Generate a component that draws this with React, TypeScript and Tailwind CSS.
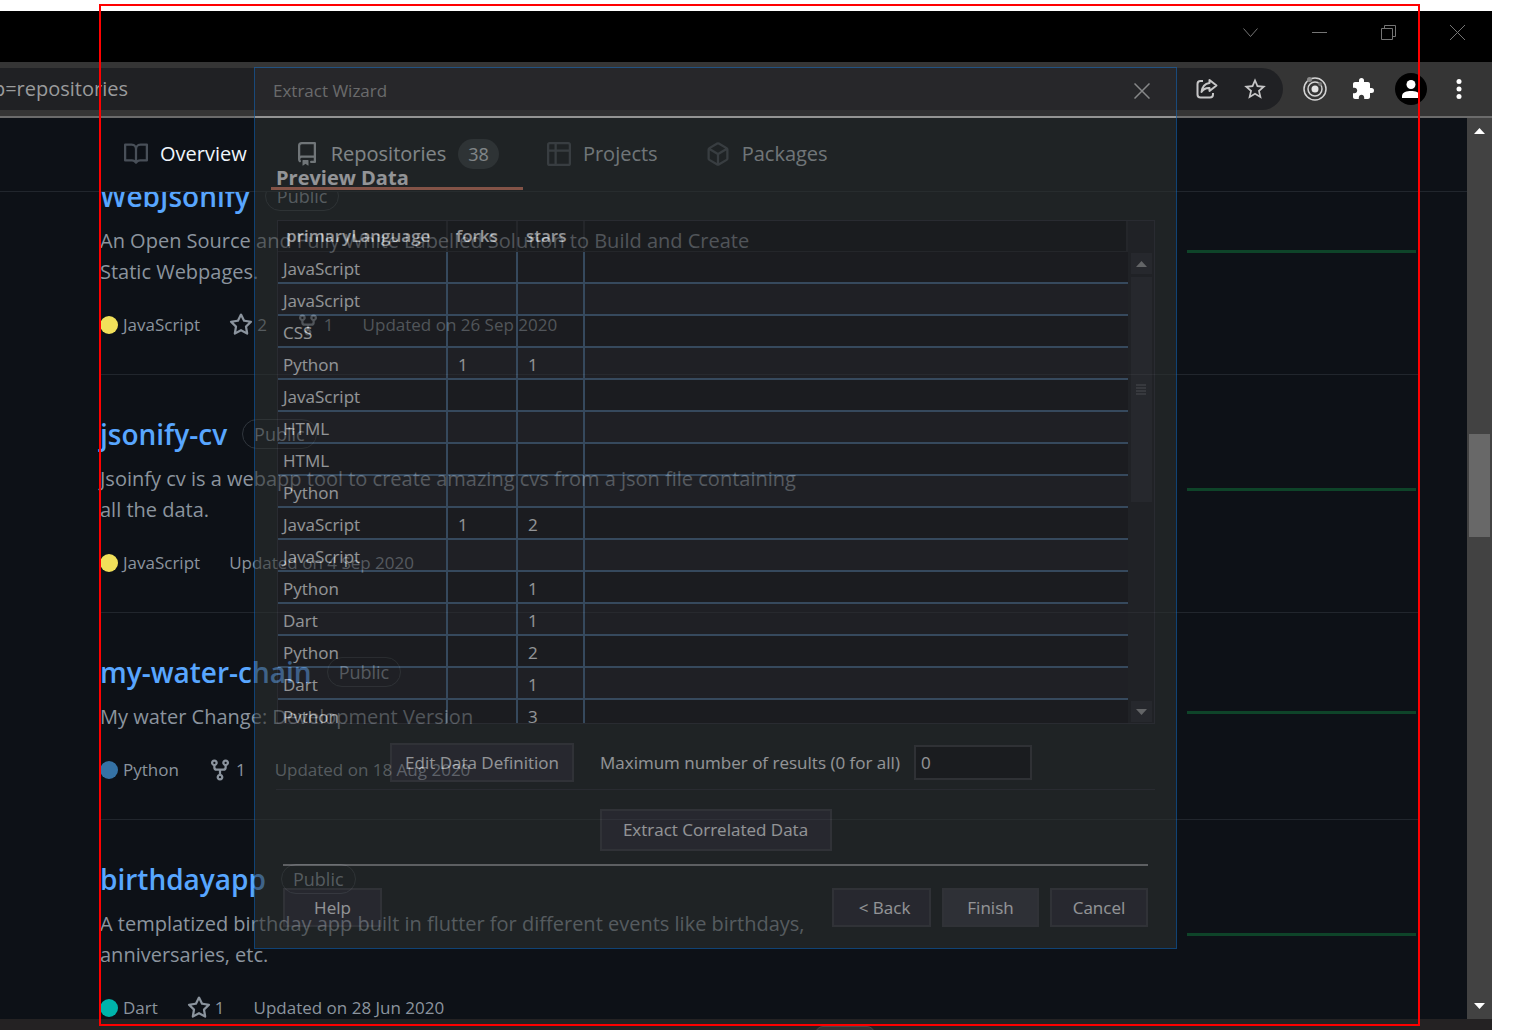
import React from 'react';
import { MdExtension, MdStarBorder } from 'react-icons/md';

const icons = {
  book: 'M0 1.75A.75.75 0 01.75 1h4.253c1.227 0 2.317.59 3 1.501A3.744 3.744 0 0111.006 1h4.245a.75.75 0 01.75.75v10.5a.75.75 0 01-.75.75h-4.507a2.25 2.25 0 00-1.591.659l-.622.621a.75.75 0 01-1.06 0l-.622-.621A2.25 2.25 0 005.258 13H.75a.75.75 0 01-.75-.75V1.75zm8.755 3a2.25 2.25 0 012.25-2.25H14.5v9h-3.757c-.71 0-1.4.201-1.992.572l.004-7.322zm-1.504 7.324l.004-5.073-.002-2.253A2.25 2.25 0 005.003 2.5H1.5v9h3.757a3.75 3.75 0 011.994.574z',
  repo: 'M2 2.5A2.5 2.5 0 014.5 0h8.75a.75.75 0 01.75.75v12.5a.75.75 0 01-.75.75h-2.5a.75.75 0 110-1.5h1.75v-2h-8a1 1 0 00-.714 1.7.75.75 0 01-1.072 1.05A2.495 2.495 0 012 11.5v-9zm10.5-1V9h-8c-.356 0-.694.074-1 .208V2.5a1 1 0 011-1h8zM5 12.25v3.25a.25.25 0 00.4.2l1.45-1.087a.25.25 0 01.3 0L8.6 15.7a.25.25 0 00.4-.2v-3.25a.25.25 0 00-.25-.25h-3.5a.25.25 0 00-.25.25z',
  table: 'M0 1.75C0 .784.784 0 1.75 0h12.5C15.216 0 16 .784 16 1.75v3.585a.746.746 0 010 .83v8.085A1.75 1.75 0 0114.25 16H6.309a.748.748 0 01-1.118 0H1.75A1.75 1.75 0 010 14.25V6.165a.746.746 0 010-.83V1.75zM1.5 6.5v7.75c0 .138.112.25.25.25H5v-8H1.5zM5 5H1.5V1.75a.25.25 0 01.25-.25H5V5zm1.5 1.5v8h7.75a.25.25 0 00.25-.25V6.5h-8zm8-1.5h-8V1.5h7.75a.25.25 0 01.25.25V5z',
  package: 'M8.878.392a1.75 1.75 0 00-1.756 0l-5.25 3.045A1.75 1.75 0 001 4.951v6.098c0 .624.332 1.2.872 1.514l5.25 3.045a1.75 1.75 0 001.756 0l5.25-3.045c.54-.313.872-.89.872-1.514V4.951c0-.624-.332-1.2-.872-1.514L8.878.392zM7.875 1.69a.25.25 0 01.25 0l4.63 2.685L8 7.133 3.245 4.375l4.63-2.685zM2.5 5.677v5.372c0 .09.047.171.125.216l4.625 2.683V8.432L2.5 5.677zm6.25 8.271l4.625-2.683a.25.25 0 00.125-.216V5.677L8.75 8.432v5.516z',
  star: 'M8 .25a.75.75 0 01.673.418l1.882 3.815 4.21.612a.75.75 0 01.416 1.279l-3.046 2.97.719 4.192a.75.75 0 01-1.088.791L8 12.347l-3.766 1.98a.75.75 0 01-1.088-.79l.72-4.194L.818 6.374a.75.75 0 01.416-1.28l4.21-.611L7.327.668A.75.75 0 018 .25zm0 2.445L6.615 5.5a.75.75 0 01-.564.41l-3.097.45 2.24 2.184a.75.75 0 01.216.664l-.528 3.084 2.769-1.456a.75.75 0 01.698 0l2.77 1.456-.53-3.084a.75.75 0 01.216-.664l2.24-2.183-3.096-.45a.75.75 0 01-.564-.41L8 2.694v.001z',
  fork: 'M5 3.25a.75.75 0 11-1.5 0 .75.75 0 011.5 0zm0 2.122a2.25 2.25 0 10-1.5 0v.878A2.25 2.25 0 005.75 8.5h1.5v2.128a2.251 2.251 0 101.5 0V8.5h1.5a2.25 2.25 0 002.25-2.25v-.878a2.25 2.25 0 10-1.5 0v.878a.75.75 0 01-.75.75h-4.5A.75.75 0 015 6.25v-.878zm3.75 7.378a.75.75 0 11-1.5 0 .75.75 0 011.5 0zm3-8.75a.75.75 0 100-1.5.75.75 0 000 1.5z',
};

function Icon({ name, className = '' }: { name: keyof typeof icons; className?: string }) {
  return (
    <svg viewBox="0 0 16 16" className={`size-6 shrink-0 ${className}`} fill="currentColor" fillRule="evenodd" aria-hidden="true">
      <path d={icons[name]} />
    </svg>
  );
}

function WindowButton({ label, children }: { label: string; children: React.ReactNode }) {
  return (
    <button aria-label={label} className="flex h-[43px] w-[69px] items-center justify-center text-[#757575]">
      <svg viewBox="0 0 15 15" className="size-[15px]" fill="none" stroke="currentColor" aria-hidden="true">
        {children}
      </svg>
    </button>
  );
}

function TitleBar() {
  return (
    <div className="flex h-[51px] shrink-0 justify-end bg-black">
      <WindowButton label="Search tabs"><path d="M.5 3.500L7.500 11.500L14.500 3.500" /></WindowButton>
      <WindowButton label="Minimize"><path d="M0 7.500H15" /></WindowButton>
      <WindowButton label="Restore"><path d="M.5 3.500H11.500V14.500H.5ZM3.500 3.500V.5H14.500V11.500H11.500" /></WindowButton>
      <WindowButton label="Close window"><path d="M0 0L15 15M15 0L0 15" /></WindowButton>
    </div>
  );
}

function Toolbar() {
  return (
    <div className="flex h-14 shrink-0 items-center justify-between border-b-2 border-[#6b6b6b] bg-[#353535] text-white">
      <div className="flex h-[42px] grow items-center rounded-r-full bg-[#202124] pr-[15px]">
        <input
          aria-label="Address"
          defaultValue="b=repositories"
          className="-ml-[22px] w-[150px] bg-transparent text-right text-[20px] text-[#9a9b9c] outline-none"
        />
        <div className="ml-auto flex items-center gap-6 text-[#c6c6c7]">
          <button aria-label="Share this page">
            <svg viewBox="0 0 24 24" className="size-6" fill="none" stroke="currentColor" strokeWidth="2" strokeLinejoin="round" aria-hidden="true">
              <path d="M9 4H6.500Q3.500 4 3.500 7V17.500Q3.500 20.500 6.500 20.500H16Q19 20.500 19 17.500V16" />
              <path d="M15.500 3L22.500 8.500L15.500 14V11Q10.500 10.500 7.500 15Q8.500 7 15.500 6Z" />
            </svg>
          </button>
          <button aria-label="Bookmark this tab"><MdStarBorder className="size-[26px]" /></button>
        </div>
      </div>
      <div className="flex items-center gap-6 pr-[21px] pl-5">
        <button aria-label="Recorder extension">
          <svg viewBox="0 0 24 24" className="size-6" fill="none" stroke="#d4d4d4" strokeWidth="1.500" aria-hidden="true">
            <circle cx="12" cy="12" r="11" />
            <circle cx="12" cy="12" r="7" />
            <circle cx="12" cy="12" r="3.500" fill="#e4e4e4" stroke="none" />
            <circle cx="6.500" cy="2.500" r="2.500" fill="#8a8a8a" stroke="none" />
            <circle cx="17" cy="7" r="2" fill="#777" stroke="none" />
          </svg>
        </button>
        <button aria-label="Extensions"><MdExtension className="size-6" /></button>
        <button aria-label="Profile" className="-mx-1 size-8 rounded-full bg-black">
          <svg viewBox="0 0 32 32" className="size-8" fill="white" aria-hidden="true">
            <circle cx="16" cy="11.500" r="4.500" />
            <path d="M7 25V23C7 19 12 18 16 18S25 19 25 23V25Z" />
          </svg>
        </button>
        <button aria-label="Menu">
          <svg viewBox="0 0 24 24" className="size-6" fill="white" aria-hidden="true">
            <circle cx="12" cy="4.500" r="2.500" /><circle cx="12" cy="12" r="2.500" /><circle cx="12" cy="19.500" r="2.500" />
          </svg>
        </button>
      </div>
    </div>
  );
}

function Tab({ icon, label, count, tone }: { icon: keyof typeof icons; label: string; count?: number; tone: string }) {
  return (
    <a
      href="#"
      aria-current={count ? 'page' : undefined}
      className={`flex items-center gap-3 border-b-3 px-6 ${count ? 'border-[#f78166]' : 'border-transparent'} ${tone}`}
    >
      <Icon name={icon} className={count ? 'text-[#c9d1d9]' : 'text-[#484f58]'} />
      <span>{label}</span>
      {count && <span className="flex h-[30px] items-center rounded-full bg-[#30363d] px-[10px] text-[18px]">{count}</span>}
    </a>
  );
}

type Repo = {
  name: string;
  about: string;
  language: string;
  dot: string;
  stars?: number;
  forks?: number;
  updated: string;
};

const repos: Repo[] = [
  { name: 'WebJsonify', about: 'An Open Source and Fully White Labelled Solution to Build and Create\nStatic Webpages.', language: 'JavaScript', dot: 'bg-[#f1e05a]', stars: 2, forks: 1, updated: '26 Sep 2020' },
  { name: 'jsonify-cv', about: 'Jsoinfy cv is a webapp tool to create amazing cvs from a json file containing\nall the data.', language: 'JavaScript', dot: 'bg-[#f1e05a]', updated: '4 Sep 2020' },
  { name: 'my-water-chain', about: 'My water Change: Development Version', language: 'Python', dot: 'bg-[#3572a5]', forks: 1, updated: '18 Aug 2020' },
  { name: 'birthdayapp', about: 'A templatized birthday app built in flutter for different events like birthdays,\nanniversaries, etc.', language: 'Dart', dot: 'bg-[#00b4ab]', stars: 1, updated: '28 Jun 2020' },
];

function RepoItem({ repo }: { repo: Repo }) {
  return (
    <li className="flex items-center justify-between border-b border-[#21262d] pt-10 pr-[3px] pb-[37px]">
      <div>
        <div className="flex h-[38px] items-center gap-[15px]">
          <a href="#" className="text-[28px] leading-[38px] font-semibold text-[#58a6ff]">{repo.name}</a>
          <span className="flex h-[30px] items-center rounded-full border border-[#30363d] px-[11px] text-[18px] font-medium text-[#8b949e]">Public</span>
        </div>
        <p className="mt-[10px] text-[20px] leading-[31px] whitespace-pre-line text-[#8b949e]">{repo.about}</p>
        <div className="mt-[26px] flex h-6 items-center gap-[29px] text-[17px] text-[#8b949e]">
          <span className="flex items-center gap-[5px]">
            <span className={`size-[18px] rounded-full ${repo.dot}`} />
            {repo.language}
          </span>
          {repo.stars && <a href="#" className="flex items-center gap-1"><Icon name="star" />{repo.stars}</a>}
          {repo.forks && <a href="#" className="flex items-center gap-1"><Icon name="fork" />{repo.forks}</a>}
          <span>Updated on {repo.updated}</span>
        </div>
      </div>
      <div className="pb-[11px]">
        <div className="h-[3px] w-[229px] bg-[#0e4429]" />
      </div>
    </li>
  );
}

const rows = [
  ['JavaScript', '', ''],
  ['JavaScript', '', ''],
  ['CSS', '', ''],
  ['Python', '1', '1'],
  ['JavaScript', '', ''],
  ['HTML', '', ''],
  ['HTML', '', ''],
  ['Python', '', ''],
  ['JavaScript', '1', '2'],
  ['JavaScript', '', ''],
  ['Python', '', '1'],
  ['Dart', '', '1'],
  ['Python', '', '2'],
  ['Dart', '', '1'],
  ['Python', '', '3'],
];

function DialogButton({ children, className = '' }: { children: React.ReactNode; className?: string }) {
  return (
    <button className={`flex h-[39px] items-center justify-center border-2 border-[#4c4c50] bg-[#3b3b42] ${className}`}>
      {children}
    </button>
  );
}

function ScrollArrow({ down = false }: { down?: boolean }) {
  return (
    <button aria-label={down ? 'Scroll down' : 'Scroll up'} className="flex h-[21px] w-[21px] items-center justify-center bg-[#3a3a3e]">
      <svg viewBox="0 0 11 6" className="h-[6px] w-[11px]" fill="#a5a5a5" aria-hidden="true">
        <path d={down ? 'M0 0H11L5.500 6Z' : 'M0 6H11L5.500 0Z'} />
      </svg>
    </button>
  );
}

function PreviewTable() {
  return (
    <div className="flex h-[504px] overflow-hidden border border-[#3f3f46] bg-[#303033]">
      <table className="grow table-fixed border-separate border-spacing-0 self-start text-left text-[17px]">
        <colgroup>
          <col className="w-[170px]" /><col className="w-[70px]" /><col className="w-[67px]" /><col />
        </colgroup>
        <thead>
          <tr className="h-[31px] bg-[#252526]">
            <th className="border-r-2 border-b border-[#36363a] py-0 pl-2 font-semibold">primaryLanguage</th>
            <th className="border-r-2 border-b border-[#36363a] py-0 pl-2 font-semibold">forks</th>
            <th className="border-r-2 border-b border-[#36363a] py-0 pl-2 font-semibold">stars</th>
            <th className="border-r-2 border-b border-[#36363a] p-0" aria-label="Empty" />
          </tr>
        </thead>
        <tbody>
          {rows.map(([language, forks, stars], i) => (
            <tr key={i} className="h-8 odd:bg-[#262627] even:bg-[#2d2d30]">
              <td className="border-r-2 border-b-2 border-[#567492] py-0 pt-1 pl-[5px] leading-[26px]">{language}</td>
              <td className="border-r-2 border-b-2 border-[#567492] py-0 pt-1 pl-[10px] leading-[26px]">{forks}</td>
              <td className="border-r-2 border-b-2 border-[#567492] py-0 pt-1 pl-[10px] leading-[26px]">{stars}</td>
              <td className="border-b-2 border-[#567492] p-0" />
            </tr>
          ))}
        </tbody>
      </table>
      <div className="flex w-[26px] shrink-0 flex-col items-center pt-8 pb-px">
        <ScrollArrow />
        <div className="mt-[3px] flex h-[225px] w-[21px] flex-col items-center justify-center gap-px bg-[#3a3a3e]">
          <div className="h-[2px] w-[10px] bg-[#58585c]" />
          <div className="h-[2px] w-[10px] bg-[#58585c]" />
          <div className="h-[2px] w-[10px] bg-[#58585c]" />
          <div className="h-[2px] w-[10px] bg-[#58585c]" />
        </div>
        <div className="mt-auto"><ScrollArrow down /></div>
      </div>
    </div>
  );
}

function ExtractWizard() {
  return (
    <section
      role="dialog"
      aria-label="Extract Wizard"
      className="absolute top-[67px] right-[342px] left-[254px] border border-[#1468bb] bg-[#2d3130] text-[17px] text-[#f8f8f8] opacity-57"
    >
      <header className="flex h-[50px] items-center justify-between border-b-2 border-[#b4b4b4] bg-[#2d2d30] pr-[26px] pb-[3px] pl-[18px] text-[#a2a2a2]">
        <h1>Extract Wizard</h1>
        <button aria-label="Close">
          <svg viewBox="0 0 16 16" className="size-4" fill="none" stroke="#d4d4d4" strokeWidth="1.500" aria-hidden="true">
            <path d="M.5 .5L15.500 15.500M15.500 .5L.5 15.500" />
          </svg>
        </button>
      </header>
      <div className="px-[21px] pt-[46px]">
        <h2 className="text-[20px] leading-7 font-bold">Preview Data</h2>
        <div className="mt-7 pl-px"><PreviewTable /></div>
        <div className="mt-[19px] flex items-center pl-[114px]">
          <DialogButton className="w-[184px]">Edit Data Definition</DialogButton>
          <label htmlFor="max-results" className="ml-[26px]">Maximum number of results (0 for all)</label>
          <input id="max-results" defaultValue="0" className="ml-[14px] h-[35px] w-[118px] border-2 border-[#4a4a4d] bg-[#252526] px-[5px] outline-none" />
        </div>
        <div className="mt-[7px] border-t border-[#3f3f46] pt-[19px]">
          <DialogButton className="mx-auto h-[42px] w-[232px]">Extract Correlated Data</DialogButton>
        </div>
        <footer className="mx-[7px] mt-[13px] flex gap-[11px] border-t-2 border-[#9a9a9c] pt-[22px] pb-[21px]">
          <DialogButton className="mr-auto w-[99px]">Help</DialogButton>
          <DialogButton className="w-[99px] pl-[6px]">&lt; Back</DialogButton>
          <DialogButton className="w-[97px] border-[#3a3a3f] bg-[#48484f]">Finish</DialogButton>
          <DialogButton className="w-[98px]">Cancel</DialogButton>
        </footer>
      </div>
    </section>
  );
}

export default function App() {
  return (
    <div className="relative flex h-screen flex-col overflow-hidden bg-white pt-[11px] pr-[27px] font-['Open_Sans','Noto_Sans',sans-serif]">
      <TitleBar />
      <Toolbar />
      <div className="flex min-h-0 grow bg-[#0d1117]">
        <div className="flex min-w-0 grow flex-col">
          <nav className="flex h-[74px] shrink-0 border-b border-[#21262d] pt-[3px] pb-px pl-[100px] text-[20px]">
            <Tab icon="book" label="Overview" tone="text-[#f0f6fc]" />
            <Tab icon="repo" label="Repositories" count={38} tone="font-medium text-[#f0f6fc]" />
            <Tab icon="table" label="Projects" tone="text-[#c9d1d9]" />
            <Tab icon="package" label="Packages" tone="text-[#c9d1d9]" />
          </nav>
          <main className="min-h-0 grow overflow-hidden pr-12 pl-[100px]">
            <ul className="-mt-[55px]">
              {repos.map((repo) => <RepoItem key={repo.name} repo={repo} />)}
            </ul>
          </main>
        </div>
        <div className="flex w-[25px] shrink-0 flex-col items-center bg-[#424242] py-[10px]">
          <svg viewBox="0 0 11 6" className="h-[6px] w-[11px]" fill="white" aria-hidden="true"><path d="M0 6H11L5.500 0Z" /></svg>
          <div className="mt-[300px] h-[103px] w-[21px] bg-[#686868]" />
          <svg viewBox="0 0 11 6" className="mt-auto h-[6px] w-[11px]" fill="white" aria-hidden="true"><path d="M0 0H11L5.500 6Z" /></svg>
        </div>
      </div>
      <div className="flex h-[11px] shrink-0 justify-center overflow-hidden bg-[#242223] pt-[7px] pl-[198px]">
        <div className="h-3 w-[60px] rounded-t-lg border border-[#4a484a] bg-[#363436]" />
      </div>
      <ExtractWizard />
      <div className="pointer-events-none absolute inset-x-[99px] inset-y-1 border-2 border-[#ff0000]" />
    </div>
  );
}
